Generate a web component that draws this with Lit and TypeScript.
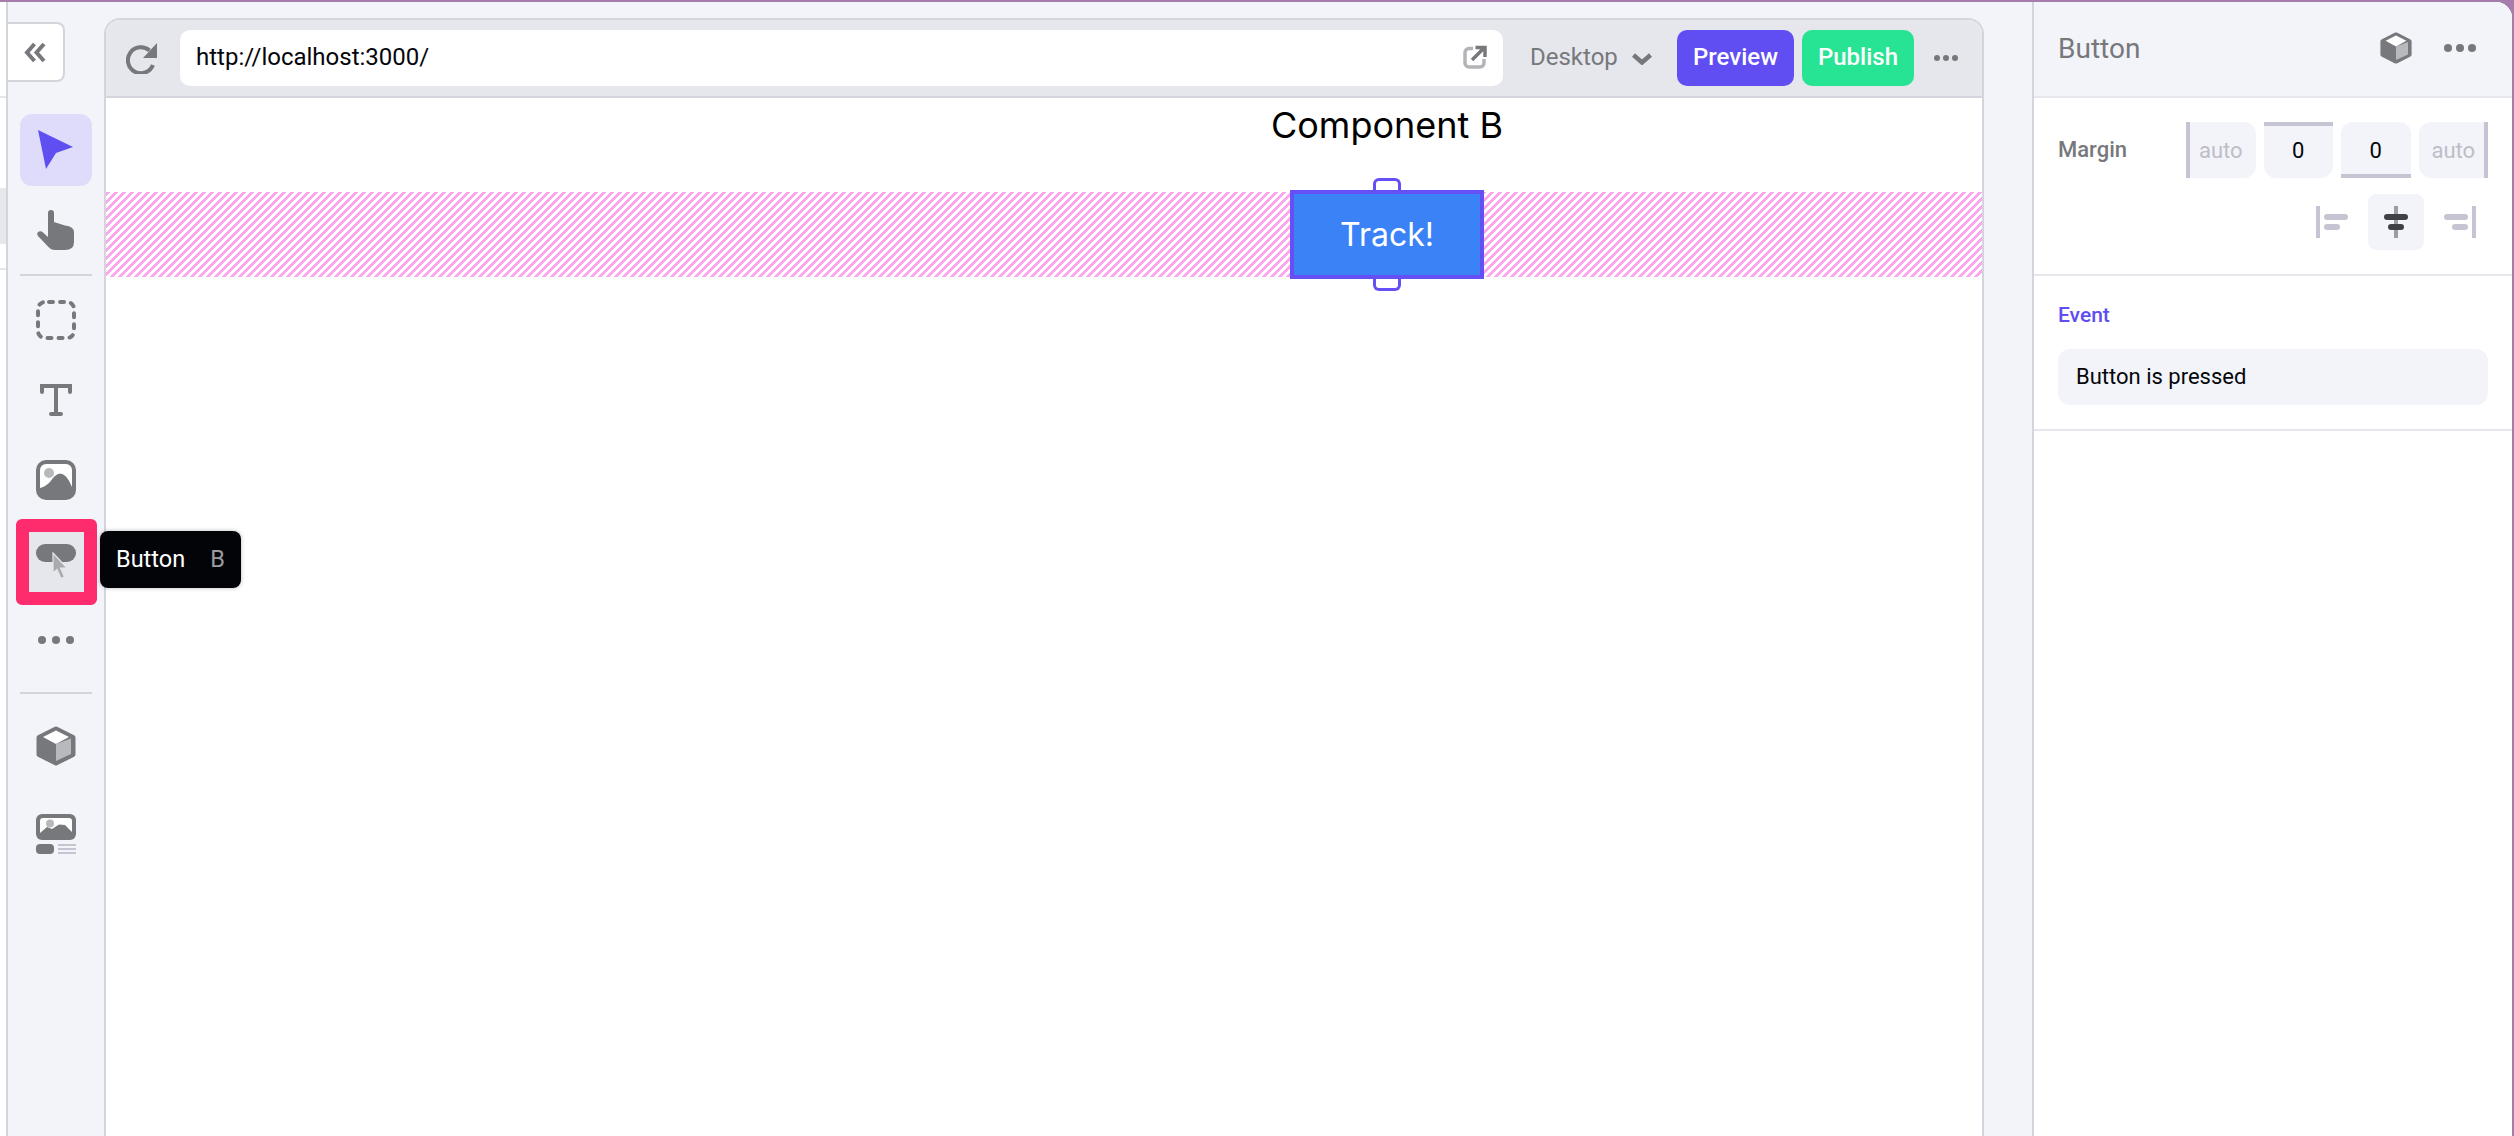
import { LitElement, html, css, svg } from "lit";
import { customElement } from "lit/decorators.js";

const G = "#77787c";
const cube = svg`<polygon points="20,3 37,11.5 37,28.5 20,37 3,28.5 3,11.5" fill="${G}" stroke="${G}" stroke-width="5" stroke-linejoin="round"/>
<polygon points="20,4.5 33,11 20,18 7,11" fill="#fff"/>
<polygon points="20,18 35,12.5 35,28 20,35" fill="#b8b9bd"/>`;

@customElement("app-root")
export class AppRoot extends LitElement {
  static styles = css`
    :host { display: block; width: 2514px; height: 1136px; overflow: hidden; font-family: Roboto, "Liberation Sans", sans-serif; }
    * { box-sizing: border-box; }
    svg { display: block; flex: none; }
    .root { height: 100%; background: #a57cab; padding: 2px 2px 0 0; }
    .app { height: 100%; display: flex; background: #f3f4f9; border-top-right-radius: 16px; overflow: hidden; }

    .strip { width: 8px; flex: none; background: #fff; border-right: 2px solid #d4d5dc; display: flex; flex-direction: column; }
    .strip i { display: block; }
    .s1 { height: 96px; border-bottom: 2px solid #e6e7ec; }
    .s2 { height: 90px; }
    .s3 { height: 56px; background: #e6e7ec; }
    .s4 { height: 26px; border-bottom: 2px solid #e6e7ec; }

    .toolbar { width: 96px; flex: none; padding-top: 20px; display: flex; flex-direction: column; align-items: center; position: relative; }
    .collapse { align-self: flex-start; width: 57px; height: 60px; background: #fff; border: 2px solid #d4d5dc; border-left: none; border-radius: 0 8px 8px 0; display: flex; align-items: center; justify-content: center; margin-bottom: 32px; padding-right: 1px; }
    .tool { width: 72px; height: 72px; border-radius: 12px; display: flex; align-items: center; justify-content: center; margin-bottom: 8px; position: relative; }
    .tool.active { background: #dfdcfb; }
    .rule { width: 72px; height: 2px; background: #d4d5dc; margin-bottom: 8px; flex: none; }
    .rule.wide { margin-top: 8px; margin-bottom: 16px; }
    .mb16 { margin-bottom: 16px; }
    .hl { position: absolute; left: -4.5px; top: -5px; width: 81.5px; height: 86px; border: 13.5px solid #fe2b6d; border-radius: 6px; background: #e6e7ec; }
    .tool svg { position: relative; }
    .tool svg.btn-ico { top: 4px; }
    .tip { position: absolute; left: 80px; top: 7px; width: 141px; height: 57px; background: #030408; border-radius: 8px; color: #fff; font-size: 23.5px; display: flex; align-items: center; justify-content: space-between; padding: 0 16px 2px; box-shadow: 0 0 4px rgba(60,60,90,.35); z-index: 2; }
    .tip span { color: #9a9ba0; }

    .canvas { width: 1880px; flex: none; margin-top: 16px; background: #fff; border: 2px solid #d4d5dc; border-bottom: none; border-radius: 16px 16px 0 0; overflow: hidden; }
    .bar { height: 78px; background: #e6e7ec; border-bottom: 2px solid #d4d5dc; display: flex; align-items: center; padding: 0 24px 0 20px; }
    .url { flex: 1; height: 56px; margin-left: 22px; background: #fff; border-radius: 10px; display: flex; align-items: center; justify-content: space-between; padding: 0 16px 2px; font-size: 24px; color: #05060a; }
    .device { display: flex; align-items: center; margin-left: 27px; width: 147px; font-size: 24px; color: #77787c; padding-bottom: 2px; }
    .device span { width: 102px; }
    .device svg { margin-top: 4px; }
    .btn { height: 56px; border-radius: 10px; color: #fff; font-size: 24px; font-weight: 500; display: flex; align-items: center; justify-content: center; padding-bottom: 2px; }
    .preview { width: 117px; background: #604ef2; }
    .publish { width: 112px; background: #27e394; margin-left: 8px; }
    .more { margin-left: 20px; }

    .title-row { height: 54px; padding-left: 1184px; margin-bottom: 40px; }
    .title { width: 194px; display: flex; justify-content: center; white-space: nowrap; font-family: Inter, sans-serif; font-size: 36px; line-height: 54px; color: #000; }
    .band { height: 85px; padding-left: 1184px; display: flex; align-items: center; background: linear-gradient(135deg, #fba6ee 0 29%, #fff 29% 50%, #fba6ee 50% 79%, #fff 79% 100%) 0 0 / 8px 8px; }
    .track { position: relative; width: 194px; height: 89px; flex: none; background: #3b82f6; border: 4px solid #6550f5; color: #fff; font-family: Inter, sans-serif; font-size: 32px; display: flex; align-items: center; justify-content: center; }
    .handle { position: absolute; left: 79px; width: 28px; height: 12px; background: #fff; border: 3px solid #6550f5; }
    .handle.t { top: -16px; border-radius: 6px 6px 0 0; border-bottom: none; }
    .handle.b { bottom: -16px; border-radius: 0 0 6px 6px; border-top: none; }

    .gap { width: 48px; flex: none; }
    .panel { flex: 1; background: #fff; border-left: 2px solid #d4d5dc; }
    .phead { height: 96px; background: #f3f4f9; border-bottom: 2px solid #e6e7ec; display: flex; align-items: center; padding: 0 36px 2px 24px; color: #77787c; font-size: 28px; }
    .phead b { font-weight: 400; flex: 1; }
    .phead .dots { margin-left: 32px; }
    .sec { height: 178px; border-bottom: 2px solid #e6e7ec; padding: 24px 24px 0 24px; }
    .mrow { display: flex; align-items: center; }
    .mlabel { width: 128px; font-size: 22px; font-weight: 500; color: #77787c; padding-bottom: 2px; }
    .boxes { display: flex; gap: 8px; }
    .box { width: 69.5px; height: 56px; background: #f3f4f9; display: flex; align-items: center; justify-content: center; font-size: 22px; color: #05060a; }
    .box.off { color: #bdbdc9; }
    .bl { border-left: 4px solid #c5c4d2; border-radius: 0 12px 12px 0; padding-right: 4px; }
    .bt { border-top: 4px solid #c5c4d2; border-radius: 0 0 12px 12px; padding-bottom: 4px; }
    .bb { border-bottom: 4px solid #c5c4d2; border-radius: 12px 12px 0 0; padding-top: 4px; }
    .br { border-right: 4px solid #c5c4d2; border-radius: 12px 0 0 12px; padding-left: 4px; }
    .arow { display: flex; justify-content: flex-end; align-items: center; margin-top: 16px; padding-right: 12px; gap: 20px; }
    .abtn { width: 56px; height: 56px; border-radius: 8px; background: #f3f4f9; display: flex; align-items: center; justify-content: center; }
    .sec2 { height: 155px; border-bottom: 2px solid #e6e7ec; padding: 27px 24px 0 24px; }
    .evt { font-size: 21px; font-weight: 500; color: #604ef2; line-height: 24px; margin-bottom: 22px; }
    .field { height: 56px; background: #f3f4f9; border-radius: 12px; display: flex; align-items: center; padding: 0 0 2px 18px; font-size: 22px; color: #05060a; }
  `;

  dots(w = 28, r = 4) {
    const m = w / 2;
    return html`<svg class="dots" width=${w} height="8" viewBox="0 0 ${w} 8"><g fill=${G}><circle cx=${r} cy="4" r=${r}/><circle cx=${m} cy="4" r=${r}/><circle cx=${w - r} cy="4" r=${r}/></g></svg>`;
  }

  render() {
    return html`<div class="root"><div class="app">
      <div class="strip"><i class="s1"></i><i class="s2"></i><i class="s3"></i><i class="s4"></i></div>

      <nav class="toolbar">
        <div class="collapse"><svg width="22" height="21" viewBox="0 0 22 21" fill="none" stroke=${G} stroke-width="4"><path d="M10.5 2 3 10.5 10.5 19M20 2 12.5 10.5 20 19"/></svg></div>
        <div class="tool active"><svg width="36" height="40" viewBox="0 0 36 40"><path d="M0 0 35 17 18 23 8 39Z" fill="#5f4ff0"/></svg></div>
        <div class="tool"><svg width="40" height="40" viewBox="0 0 40 40"><path d="M12 3a3 3 0 0 1 6 0V12L29 15.5Q38 16.5 38 22V32Q38 40 29 40H19Q15 40 12 36.5L2 26Q0 23 3 21.5 5 20.5 7 22.5L12 27Z" fill=${G}/></svg></div>
        <div class="rule"></div>
        <div class="tool"><svg width="40" height="40" viewBox="0 0 40 40"><rect x="2" y="2" width="36" height="36" rx="7" fill="none" stroke=${G} stroke-width="4" stroke-linecap="round" stroke-dasharray="4 7.05" stroke-dashoffset="-4"/></svg></div>
        <div class="tool"><svg width="32" height="32" viewBox="0 0 32 32" fill="none" stroke=${G} stroke-width="4" stroke-linecap="round"><path d="M2 8V2H30V8M16 2V30M11 30H21"/></svg></div>
        <div class="tool"><svg width="40" height="40" viewBox="0 0 40 40"><rect width="40" height="40" rx="10" fill=${G}/><path d="M4 10a6 6 0 0 1 6-6H30a6 6 0 0 1 6 6V27Q31 14 24 13.5 19 14 14 22 9 27 4 28Z" fill="#fff"/><circle cx="13" cy="13" r="5" fill="#b8b9bd"/></svg></div>
        <div class="tool">
          <div class="hl"></div>
          <svg class="btn-ico" width="40" height="40" viewBox="0 0 40 40"><rect y="0" width="40" height="18" rx="9" fill=${G}/><path d="M17 9 31 24H24.5L28.5 33 25 34.5 21 25.5 17 29Z" fill="#a9aaae" stroke="#e6e7ec" stroke-width="1.2"/></svg>
          <div class="tip">Button <span>B</span></div>
        </div>
        <div class="tool">${this.dots(36)}</div>
        <div class="rule wide"></div>
        <div class="tool mb16"><svg width="40" height="40" viewBox="0 0 40 40">${cube}</svg></div>
        <div class="tool"><svg width="40" height="40" viewBox="0 0 40 40"><rect width="40" height="26" rx="6" fill=${G}/><path d="M4 7a3 3 0 0 1 3-3H33a3 3 0 0 1 3 3V18L29 11 23 10.5 16 15 11 13 4 19Z" fill="#fff"/><circle cx="14" cy="9.5" r="4" fill="#b8b9bd"/><rect y="30" width="18" height="10" rx="4" fill=${G}/><path d="M22 31H40M22 35H40M22 39H40" stroke="#c5c4d2" stroke-width="2"/></svg></div>
      </nav>

      <main class="canvas">
        <div class="bar">
          <svg width="32" height="32" viewBox="0 0 32 32" fill="none"><path d="M23.5 8.5A13 13 0 1 0 27 23" stroke=${G} stroke-width="4"/><path d="M31 1V16H17Z" fill=${G}/></svg>
          <div class="url">http://localhost:3000/
            <svg width="24" height="24" viewBox="0 0 24 24" fill="none" stroke-width="3.5"><path d="M10 3.5H6a4 4 0 0 0-4 4V18a4 4 0 0 0 4 4H17a4 4 0 0 0 4-4V14" stroke="#b3b4b8"/><path d="M9 15 21 3M12.5 2.5H22V12" stroke=${G}/></svg>
          </div>
          <div class="device"><span>Desktop</span>
            <svg width="20" height="12" viewBox="0 0 20 12" fill="none" stroke=${G} stroke-width="4.5"><path d="M1.5 2 10 9.5 18.5 2"/></svg>
          </div>
          <div class="btn preview">Preview</div>
          <div class="btn publish">Publish</div>
          <div class="more">${this.dots(24, 3)}</div>
        </div>
        <div class="title-row"><div class="title">Component B</div></div>
        <div class="band"><div class="track"><i class="handle t"></i>Track!<i class="handle b"></i></div></div>
      </main>

      <div class="gap"></div>

      <aside class="panel">
        <div class="phead"><b>Button</b>
          <svg width="32" height="32" viewBox="0 0 40 40">${cube}</svg>
          ${this.dots(32)}
        </div>
        <div class="sec">
          <div class="mrow"><div class="mlabel">Margin</div>
            <div class="boxes">
              <div class="box off bl">auto</div><div class="box bt">0</div><div class="box bb">0</div><div class="box off br">auto</div>
            </div>
          </div>
          <div class="arow">
            <svg width="32" height="32" viewBox="0 0 32 32" fill="#c5c4d2"><rect width="4" height="32"/><rect x="8" y="8" width="24" height="6" rx="3"/><rect x="8" y="18" width="16" height="6" rx="3"/></svg>
            <div class="abtn"><svg width="24" height="32" viewBox="0 0 24 32"><rect x="10" width="4" height="32" fill="#9c9da3"/><rect y="8" width="24" height="6" rx="3" fill="#3f4147"/><rect x="4" y="18" width="16" height="6" rx="3" fill="#3f4147"/></svg></div>
            <svg width="32" height="32" viewBox="0 0 32 32" fill="#c5c4d2"><rect x="28" width="4" height="32"/><rect y="8" width="24" height="6" rx="3"/><rect x="8" y="18" width="16" height="6" rx="3"/></svg>
          </div>
        </div>
        <div class="sec2">
          <div class="evt">Event</div>
          <div class="field">Button is pressed</div>
        </div>
      </aside>
    </div></div>`;
  }
}
